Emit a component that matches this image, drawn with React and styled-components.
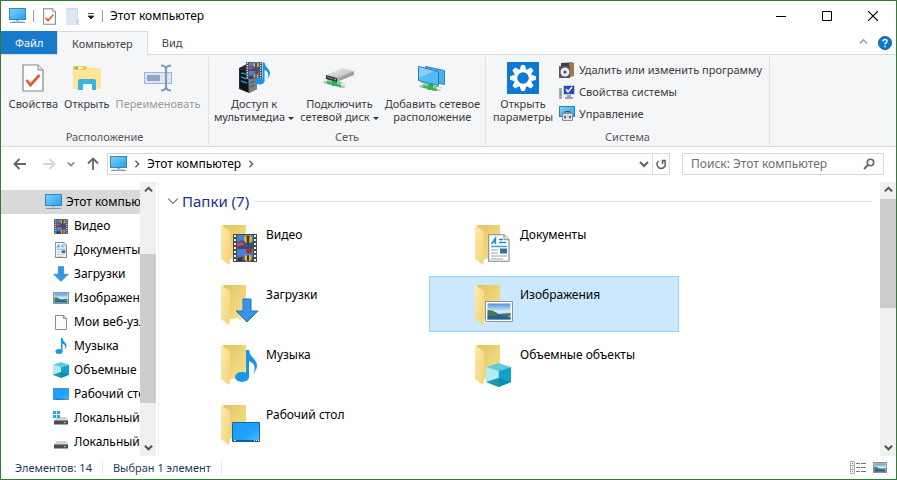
import React from 'react'
import styled, { createGlobalStyle, css } from 'styled-components'

const GlobalStyle = createGlobalStyle`
   * {
      box-sizing: border-box;
   }
   body {
      margin: 0;
      background: #fff;
      font-family: 'Noto Sans', 'Open Sans', sans-serif;
      font-size: 12px;
      line-height: 16px;
      color: #000;
   }
   button, input {
      font: inherit;
      color: inherit;
      border: 0;
      padding: 0;
      margin: 0;
      background: none;
   }
   ul {
      list-style: none;
      margin: 0;
      padding: 0;
   }
   svg {
      display: block;
      flex: none;
   }
`

/* ---------- icons ---------- */

const Svg = ({ w = 16, h = w, vw = w, vh = h, children }) => (
   <svg width={w} height={h} viewBox={`0 0 ${vw} ${vh}`} fill="none" aria-hidden="true">
      {children}
   </svg>
)

const Gradients = () => (
   <svg width="0" height="0" aria-hidden="true">
      <defs>
         <linearGradient id="screen" x1="0" y1="0" x2="1" y2="1">
            <stop offset="0" stopColor="#7fd0fc" />
            <stop offset="0.5" stopColor="#50b9f6" />
            <stop offset="1" stopColor="#25a0ee" />
         </linearGradient>
         <linearGradient id="desk" x1="0" y1="0" x2="1" y2="1">
            <stop offset="0" stopColor="#1a9dfb" />
            <stop offset="0.6" stopColor="#20a2ff" />
            <stop offset="1" stopColor="#5cbcff" />
         </linearGradient>
         <linearGradient id="back" x1="0" y1="0" x2="1" y2="1">
            <stop offset="0" stopColor="#e2c25f" />
            <stop offset="1" stopColor="#fbe48f" />
         </linearGradient>
         <linearGradient id="flap" x1="0" y1="0" x2="1" y2="1">
            <stop offset="0" stopColor="#ffeaa8" />
            <stop offset="1" stopColor="#f3d27a" />
         </linearGradient>
         <linearGradient id="sky" x1="0" y1="0" x2="0" y2="1">
            <stop offset="0" stopColor="#4b93dc" />
            <stop offset="0.5" stopColor="#d9eefa" />
            <stop offset="1" stopColor="#6aa5c9" />
         </linearGradient>
         <linearGradient id="metal" x1="0" y1="0" x2="1" y2="1">
            <stop offset="0" stopColor="#f1f1f1" />
            <stop offset="1" stopColor="#b4b4b4" />
         </linearGradient>
      </defs>
   </svg>
)

const ComputerIcon = () => (
   <Svg w={17} h={16}>
      <rect x="0.5" y="0.5" width="16" height="11" fill="url(#screen)" stroke="#3b86b8" />
      <path d="M7 12h3v1H7z" fill="#9fb4c4" />
      <path d="M1 14.5h15" stroke="#7c9bb3" />
      <path d="M3 13.5h11" stroke="#c6d5e0" />
   </Svg>
)

const CheckPageIcon = ({ w = 13, h = 17 }) => (
   <Svg w={w} h={h} vw={22} vh={28}>
      <path d="M1 1h15l5 5v21H1z" fill="#fff" stroke="#86868c" strokeWidth={w > 13 ? 1.2 : 1.8} />
      <path d="M16 1v5h5" fill="#eee" stroke="#86868c" />
      <path d="M4.500 16l4 5 9-10" stroke="#df602d" strokeWidth="2.800" />
   </Svg>
)

const BlankFolderIcon = () => (
   <Svg w={13} h={17}>
      <path d="M0 0h11v9l2 2v6H0z" fill="#dce6f5" />
      <path d="M10 11v5l3-1v-4z" fill="#c8d5ea" />
      <path d="M.5.5h11v9" stroke="#cbd7ea" />
   </Svg>
)

const OpenFolderIcon = () => (
   <Svg w={28} h={24}>
      <path d="M0 1l1-1h12l2 2h13v21H0z" fill="#ffe597" />
      <path d="M0 1l1-1h12l1 2-2 2H0z" fill="#f1cb45" />
      <path d="M3 1h7v2H3z" fill="#fff6d2" />
      <path d="M2 1h3v2H2z" fill="#62b8a0" />
      <path d="M10 18h9v6h-9z" fill="#f5f6f7" />
      <path d="M5 15q0-2 2-2h14q2 0 2 2v9h-4v-6h-9v6H5z" fill="#38b4e4" />
   </Svg>
)

const RenameIcon = () => (
   <Svg w={28} h={28}>
      <rect x="0.5" y="8.500" width="27" height="11" fill="#dde5f3" stroke="#a4b4d0" />
      <rect x="3" y="11" width="13" height="6" fill="#92a5c9" />
      <path d="M17 1.500q4 0 5 3q1-3 5-3M17 26.500q4 0 5-3q1 3 5 3M22 4v20" stroke="#8598ba" strokeWidth="2.200" />
   </Svg>
)

const Film = ({ x, y, w, h }) => (
   <svg x={x} y={y} width={w} height={h} viewBox="0 0 24 28" preserveAspectRatio="none">
      <path d="M0 0h24v28H0z" fill="#4b4a46" />
      <path d="M2 1v27M22 1v27" stroke="#efefef" strokeWidth="2" strokeDasharray="2 2" />
      <path d="M4 1h16v12H4zM4 15h16v12H4z" fill="#3f83d8" />
      <path d="M4 8l6-2 4 3 6-1v5H4zM4 24l6-2 3 3 7-2v4H4z" fill="#34528c" />
      <circle cx="15" cy="5" r="4" fill="#e9b92d" />
      <path d="M13.500 1.500h3l-.5 9h-2z" fill="#46361f" />
      <path d="M4 9l4-1 4 2-4 2H4z" fill="#dc4255" />
      <circle cx="16" cy="17" r="3" fill="#9c3040" />
      <circle cx="15" cy="24" r="3.500" fill="#f0b52a" />
      <path d="M14 21h2v6h-2zM5 24l4-1v4H5z" fill="#4d2c35" />
   </svg>
)

const Note = ({ x, y, w, h }) => (
   <svg x={x} y={y} width={w} height={h} viewBox="0 0 22 32">
      <ellipse cx="7" cy="27" rx="7" ry="5" fill="#1796ea" />
      <path d="M11 0h3c1 8 8 9 8 16q0 4-4 8c4-8 0-11-4-13v16h-3z" fill="#1796ea" />
   </svg>
)

const MediaIcon = () => (
   <Svg w={32} h={32}>
      <path d="M1 6l8-4 10 3v22l-8 4-10-4z" fill="#26292e" />
      <path d="M10 9l9-4v22l-8 4z" fill="#7b8087" />
      <path d="M2 8l8 2v20l-8-4z" fill="#101419" />
      <path d="M3 11l6 1M3 15l6 2M3 19l6 2" stroke="#2587d5" strokeWidth="1.500" />
      <path d="M12 13l5-2M12 17l5-2M12 21l5-2M12 25l5-2" stroke="#4e535a" />
      <Film x={8} y={0} w={16} h={17} />
      <Note x={17} y={0} w={15} h={23} />
   </Svg>
)

const Pipe = () => (
   <>
      <path d="M2 2.500l18 5" stroke="#4aa95e" strokeWidth="5" />
      <path d="M2 1.500l18 5" stroke="#86da97" strokeWidth="2" />
      <path d="M1 2.500l3 1M18 7l4 1" stroke="#b5c4ba" strokeWidth="5" />
      <path d="M1 1.500l3 1M18 6l4 1" stroke="#f3f7f4" strokeWidth="2" />
      <path d="M9 2h5v6H9z" fill="#36ad50" />
   </>
)

const NetDriveIcon = () => (
   <Svg w={32} h={20}>
      <g transform="translate(0 10)">
         <Pipe />
      </g>
      <path d="M3 7L20 0l11 3-17 7z" fill="url(#metal)" />
      <path d="M3 7l11 3v4L3 11z" fill="#2f3233" />
      <path d="M14 10l17-7v4l-17 7z" fill="#a0a3a4" />
      <path d="M4 9l6 2" stroke="#8f9394" />
      <path d="M11 11.500h2" stroke="#40d060" strokeWidth="1.500" />
   </Svg>
)

const NetPlaceIcon = () => (
   <Svg w={28} h={25}>
      <g transform="translate(1 16)">
         <Pipe />
      </g>
      <path d="M7.500.5l19 4v14l-19-4z" fill="#48b3f2" stroke="#2b83bd" />
      <path d="M.5.5l20 5v14l-20-5z" fill="#55bbf5" stroke="#2b7ab3" />
      <path d="M1 1l15 4L1 12z" fill="#fff" opacity="0.3" />
   </Svg>
)

const teeth = [0, 45, 90, 135, 180, 225, 270, 315]

const SettingsIcon = () => (
   <Svg w={32} h={32}>
      <path d="M0 0h32v32H0z" fill="#0a7ad8" />
      {teeth.map((a) => (
         <path key={a} d="M13.500 7l1-3.500h3l1 3.500z" fill="#fff" stroke="#fff" transform={`rotate(${a} 16 16)`} />
      ))}
      <circle cx="16" cy="16" r="7.500" stroke="#fff" strokeWidth="3.500" />
   </Svg>
)

const UninstallIcon = () => (
   <Svg w={16}>
      <path d="M2 1l10-1 3 1v13l-4 1z" fill="#7b8a58" />
      <path d="M10 1l4 1v12l-4 1z" fill="#b66f44" />
      <path d="M2 1h8v4H2z" fill="#3a3f43" />
      <path d="M0 4h11v12H0z" fill="#55585a" />
      <circle cx="6" cy="10" r="4.500" fill="#e9ecee" />
      <circle cx="6" cy="10" r="1.500" fill="#4b4e50" />
   </Svg>
)

const SystemIcon = () => (
   <Svg w={16}>
      <path d="M0 4h3v11H0z" fill="#a7aeb2" />
      <path d="M1 6h1v6H1z" fill="#66bd69" />
      <path d="M4 1h12v10H4z" fill="#cdd2d8" />
      <path d="M5 2h10v8H5z" fill="#2646c3" />
      <path d="M7 5l2 3 4-5" stroke="#fff" strokeWidth="1.500" />
      <path d="M8 11h4v2h2v2H6v-2h2z" fill="#9aa2aa" />
   </Svg>
)

const ManageIcon = () => (
   <Svg w={16}>
      <rect x="0.5" y="0.5" width="15" height="10" fill="url(#screen)" stroke="#2b7fb5" />
      <path d="M6 7V5.500h5V7" stroke="#555" />
      <path d="M3.500 7.500h10v7h-10z" fill="#e6e8ea" stroke="#8b9196" />
      <path d="M4 10h9" stroke="#b7bcc0" />
      <path d="M6 10v2.500M11 10v2.500" stroke="#45494c" strokeWidth="1.500" />
   </Svg>
)

const Picture = ({ x = 0, y = 0, w, h }) => (
   <svg x={x} y={y} width={w} height={h} viewBox="0 0 28 21" preserveAspectRatio="none">
      <path d="M.5.5h27v20H.5z" fill="#fff" stroke="#8d949a" strokeWidth={w > 20 ? 1 : 3} />
      <path d="M2.500 2.500h23v16h-23z" fill="url(#sky)" />
      <path d="M2.500 9q6 0 11 4l12-1v3h-23z" fill="#427b55" />
      <path d="M2.500 15l14-1 9 2v2.500h-23z" fill="#27618c" />
   </svg>
)

const Page = ({ x = 0, y = 0, w, h, small }) => (
   <svg x={x} y={y} width={w} height={h} viewBox="0 0 22 28" preserveAspectRatio="none">
      <path d="M.7.7H16l5 5v21.600H.7z" fill="#fff" stroke="#85888c" strokeWidth={small ? 1.8 : 1.1} />
      <path d="M16 .7v5h5" fill="#e7e9eb" stroke="#85888c" />
      <path d="M3.500 10l4-6v6M4.500 8h3M11 5.500h4M11 8.500h7" stroke="#2389cb" strokeWidth="1.400" />
      <path d="M3 12.500h16" stroke="#36a3da" strokeWidth="1.500" />
      <path d="M3 16h7M3 19h7M3 22h16M3 25h12" stroke="#9aa1a6" />
      <path d="M12 14.500h7v5h-7z" fill="#3b6c9f" />
   </svg>
)

const Arrow = ({ x = 0, y = 0, w, h }) => (
   <svg x={x} y={y} width={w} height={h} viewBox="0 0 24 25" preserveAspectRatio="none">
      <path d="M8 1h8v12h7L12 24 1 13h7z" fill="#3795e6" stroke="#2478bd" />
   </svg>
)

const Cube = ({ x = 0, y = 0, w, h }) => (
   <svg x={x} y={y} width={w} height={h} viewBox="0 0 24 24" preserveAspectRatio="none">
      <path d="M0 4l12-4 12 4-12 4z" fill="#62c9da" />
      <path d="M0 4l12 4v16L0 19z" fill="#6fd3e2" />
      <path d="M24 4L12 8v16l12-5z" fill="#12a3cb" />
      <path d="M0 4l12 4v7L0 19z" fill="#b3ebf1" />
      <path d="M0 19l12-4 12 4-12 5z" fill="#0a87a6" opacity="0.8" />
   </svg>
)

const Desk = ({ x = 0, y = 0, w, h }) => (
   <svg x={x} y={y} width={w} height={h} viewBox="0 0 28 20" preserveAspectRatio="none">
      <path d="M.5.5h27v19H.5z" fill="url(#desk)" stroke="#13679f" />
      <path d="M1 18.500h26" stroke="#0c5b98" />
      <path d="M2 18.500h1.500M22 18.500h1M24 18.500h1M26 18.500h1" stroke="#fff" />
   </svg>
)

const BlankPageIcon = () => (
   <Svg w={12} h={15}>
      <path d="M.5.5h8l3 3v11H.5z" fill="#fbfbfb" stroke="#8d8d8d" />
      <path d="M8.500.5v3h3" stroke="#8d8d8d" />
   </Svg>
)

const DriveIcon = ({ system }) => (
   <Svg w={16}>
      <path d="M4 7h9l2 4H1z" fill="#cfd1d2" />
      <path d="M1 10.500h14v4H1z" fill="#4b4e50" />
      <path d="M11 12.500h2" stroke="#46e06a" strokeWidth="1.500" />
      {system && <path d="M0 1h3v3H0zM4 1h3v3H4zM0 5h3v3H0zM4 5h3v3H4z" fill="#18afe0" />}
   </Svg>
)

const FolderIcon = ({ children }) => (
   <Svg w={40} h={42}>
      <path d="M2 0h23v34l-17 2z" fill="url(#back)" />
      <path d="M0 0l9 6v27l-1 7-8-6z" fill="url(#flap)" />
      <path d="M9 34l9-1v4l-9 1z" fill="#fff" />
      {children}
   </Svg>
)

const Chevron = ({ dir, size = 8, color = '#666', weight = 1.5 }) => {
   const d = { up: 'M1 6l4-4 4 4', down: 'M1 3l4 4 4-4', right: 'M3 1l4 4-4 4' }[dir]
   return (
      <Svg w={size} vw={10} vh={10}>
         <path d={d} stroke={color} strokeWidth={weight} />
      </Svg>
   )
}

const NavArrow = ({ dir, color }) => (
   <Svg w={14}>
      <g transform={`rotate(${dir} 7 7)`}>
         <path d="M13 7H2M6.500 2L1.500 7l5 5" stroke={color} strokeWidth="1.800" />
      </g>
   </Svg>
)

/* ---------- window frame ---------- */

const Window = styled.div`
   display: flex;
   flex-direction: column;
   height: 100vh;
   border: 1px solid #2f7d32;
   overflow: hidden;
`

const TitleBar = styled.header`
   display: flex;
   align-items: center;
   height: 30px;
   padding-left: 8px;
   flex: none;
`

const QuickAccess = styled.div`
   display: flex;
   align-items: center;
   gap: 7px;
   margin-right: 7px;
`

const Divider = styled.span`
   width: 1px;
   height: 12px;
   background: ${(p) => p.$color || '#9b9b9b'};
`

const Title = styled.h1`
   flex: 1;
   margin: 0;
   font-size: 12px;
   font-weight: 400;
`

const IconButton = styled.button`
   display: flex;
   align-items: center;
   justify-content: center;
   width: ${(p) => p.$w || 16}px;
   height: ${(p) => p.$h || 20}px;
   flex: none;
`

const TabBar = styled.nav`
   display: flex;
   align-items: stretch;
   height: 24px;
   flex: none;
   border-bottom: 1px solid #dadbdc;
   font-size: 11px;
`

const Tab = styled.button`
   padding: 0 14px;
   color: #444;
   ${(p) =>
      p.$file &&
      css`
         width: 56px;
         background: #1979ca;
         color: #fff;
      `}
   ${(p) =>
      p.$active &&
      css`
         margin-bottom: -1px;
         background: #f5f6f7;
         border: 1px solid #dadbdc;
         border-bottom: 0;
      `}
`

const TabBarEnd = styled.div`
   display: flex;
   align-items: center;
   gap: 6px;
   margin-left: auto;
   padding-right: 3px;
`

/* ---------- ribbon ---------- */

const Ribbon = styled.section`
   display: flex;
   flex: none;
   height: 92px;
   padding-top: 2px;
   background: #f5f6f7;
   border-bottom: 1px solid #dadbdc;
   font-size: 11px;
`

const Group = styled.div`
   display: flex;
   flex-direction: column;
   width: ${(p) => p.$w}px;
   margin-bottom: 1px;
   border-right: 1px solid #e0e1e3;
`

const GroupItems = styled.div`
   display: flex;
   flex: 1;
   justify-content: center;
   gap: 6px;
   padding-top: 2px;
`

const GroupTitle = styled.div`
   text-align: center;
   color: #5a5a5a;
`

const BigButton = styled.button`
   display: flex;
   flex-direction: column;
   align-items: center;
   color: ${(p) => (p.disabled ? '#9a9a9a' : '#3b3b3b')};
   line-height: 13px;
   white-space: nowrap;
`

const BigIcon = styled.span`
   display: flex;
   align-items: center;
   justify-content: center;
   height: 38px;
`

const Caret = styled.span`
   display: inline-block;
   margin-left: 3px;
   border: 3px solid transparent;
   border-top-color: #333;
   border-bottom: 0;
   vertical-align: middle;
`

const SmallList = styled.div`
   display: flex;
   flex-direction: column;
`

const SmallButton = styled.button`
   display: flex;
   align-items: center;
   gap: 4px;
   height: 22px;
   color: #3b3b3b;
   white-space: nowrap;
`

/* ---------- address row ---------- */

const AddressRow = styled.div`
   display: flex;
   align-items: center;
   flex: none;
   height: 35px;
   padding: 0 12px 1px 11px;
`

const NavButtons = styled.div`
   display: flex;
   align-items: center;
   gap: 7px;
   margin-right: 8px;
`

const AddressBox = styled.div`
   display: flex;
   align-items: center;
   flex: 1;
   height: 22px;
   padding-left: 2px;
   border: 1px solid #d9d9d9;
   gap: 6px;
`

const AddressEnd = styled.div`
   display: flex;
   margin-left: auto;

   button + button {
      border-left: 1px solid #d9d9d9;
   }
`

const SearchBox = styled.label`
   display: flex;
   align-items: center;
   width: 202px;
   height: 22px;
   margin-left: 12px;
   padding: 0 8px;
   border: 1px solid #d9d9d9;

   input {
      flex: 1;
      min-width: 0;
      outline: 0;
   }
   input::placeholder {
      color: #6d6d6d;
      opacity: 1;
   }
`

/* ---------- body ---------- */

const Body = styled.div`
   display: flex;
   flex: 1;
   min-height: 0;
`

const Sidebar = styled.aside`
   display: flex;
   flex: none;
   width: 158px;
   padding-right: 2px;
   border-right: 1px solid #f0f0f0;
`

const Tree = styled.ul`
   flex: 1;
   min-width: 0;
   padding-top: 8px;
   overflow: hidden;
`

const TreeRow = styled.li`
   display: flex;
   align-items: center;
   gap: ${(p) => (p.$root ? 4 : 5)}px;
   height: 24px;
   padding-left: ${(p) => (p.$root ? 44 : 52)}px;
   background: ${(p) => (p.$root ? '#d9d9d9' : 'none')};
   white-space: nowrap;
   overflow: hidden;
`

const TreeIcon = styled.span`
   display: flex;
   justify-content: center;
   width: 16px;
   flex: none;
`

const Bar = styled.div`
   display: flex;
   flex-direction: column;
   flex: none;
   width: 16px;
   background: #f0f0f0;
`

const Track = styled.div`
   display: grid;
   flex: 1;
   grid-template-rows: ${(p) => p.$rows};
`

const Thumb = styled.span`
   grid-row: 2;
   background: #cdcdcd;
`

const ScrollBar = ({ rows }) => (
   <Bar>
      <IconButton $h={17} aria-label="Вверх">
         <Chevron dir="up" size={9} color="#505050" weight={2.2} />
      </IconButton>
      <Track $rows={rows}>
         <Thumb />
      </Track>
      <IconButton $h={17} aria-label="Вниз">
         <Chevron dir="down" size={9} color="#505050" weight={2.2} />
      </IconButton>
   </Bar>
)

const Content = styled.main`
   flex: 1;
   min-width: 0;
   padding: 8px 8px 0 8px;
   overflow: hidden;
`

const SectionHead = styled.h2`
   display: flex;
   align-items: center;
   gap: 3px;
   height: 22px;
   margin: 0 0 4px;
   font-size: 15px;
   font-weight: 400;
   color: #1e3287;

   &::after {
      content: '';
      flex: 1;
      height: 1px;
      margin-left: 3px;
      background: #e2e2e2;
   }
`

const Tiles = styled.ul`
   display: grid;
   grid-template-columns: repeat(auto-fill, 250px);
   gap: 4px;
   padding-left: 8px;
`

const Tile = styled.li`
   display: flex;
   gap: 5px;
   height: 56px;
   padding: 8px 0 0 45px;
   border: 1px solid ${(p) => (p.$selected ? '#99d1ff' : 'transparent')};
   background: ${(p) => (p.$selected ? '#cce8ff' : 'none')};

   span {
      padding-top: 2px;
   }
`

const StatusBar = styled.footer`
   display: flex;
   align-items: center;
   flex: none;
   height: 23px;
   gap: 10px;
   padding: 0 8px 0 14px;
   font-size: 11px;
   color: #1e395b;
`

const ViewButtons = styled.div`
   display: flex;
   gap: 6px;
   margin-left: auto;
`

const tree = [
   ['Видео', <Svg w={16}><Film x={1} y={1} w={14} h={15} /></Svg>],
   ['Документы', <Svg w={16}><Page x={2} w={12} h={16} small /></Svg>],
   ['Загрузки', <Svg w={16}><Arrow w={16} h={16} /></Svg>],
   ['Изображения', <Svg w={16} h={12}><Picture w={16} h={12} /></Svg>],
   ['Мои веб-узлы', <BlankPageIcon />],
   ['Музыка', <Svg w={16}><Note x={2} w={12} h={16} /></Svg>],
   ['Объемные объекты', <Svg w={16}><Cube w={16} h={16} /></Svg>],
   ['Рабочий стол', <Svg w={16} h={12}><Desk w={16} h={12} /></Svg>],
   ['Локальный диск', <DriveIcon system />],
   ['Локальный диск', <DriveIcon />],
]

const folders = [
   ['Видео', <Film x={12} y={9} w={24} h={28} />],
   ['Документы', <Page x={13} y={9} w={22} h={28} />],
   ['Загрузки', <Arrow x={14} y={13} w={24} h={25} />],
   ['Изображения', <Picture x={10} y={16} w={28} h={21} />],
   ['Музыка', <Note x={14} y={5} w={22} h={32} />],
   ['Объемные объекты', <Cube x={11} y={18} w={25} h={24} />],
   ['Рабочий стол', <Desk x={11} y={17} w={28} h={20} />],
]

function App() {
   return (
      <Window>
         <GlobalStyle />
         <TitleBar>
            <QuickAccess>
               <ComputerIcon />
               <Divider />
               <IconButton $w={16} aria-label="Свойства">
                  <CheckPageIcon />
               </IconButton>
               <IconButton $w={16} aria-label="Новая папка">
                  <BlankFolderIcon />
               </IconButton>
               <IconButton $w={8} aria-label="Настройка панели">
                  <Svg w={8} h={7}>
                     <path d="M1 .5h6M1 3h6L4 6z" stroke="#222" fill="#222" strokeWidth="0.8" />
                  </Svg>
               </IconButton>
               <Divider />
            </QuickAccess>
            <Title>Этот компьютер</Title>
            <IconButton $w={46} $h={30} aria-label="Свернуть">
               <Svg w={10}>
                  <path d="M0 5.500h10" stroke="#000" />
               </Svg>
            </IconButton>
            <IconButton $w={46} $h={30} aria-label="Развернуть">
               <Svg w={10}>
                  <path d="M.5.5h9v9h-9z" stroke="#000" />
               </Svg>
            </IconButton>
            <IconButton $w={46} $h={30} aria-label="Закрыть">
               <Svg w={10}>
                  <path d="M0 0l10 10M10 0L0 10" stroke="#000" strokeWidth="1.200" />
               </Svg>
            </IconButton>
            <Gradients />
         </TitleBar>

         <TabBar>
            <Tab $file>Файл</Tab>
            <Tab $active>Компьютер</Tab>
            <Tab>Вид</Tab>
            <TabBarEnd>
               <IconButton aria-label="Свернуть ленту">
                  <Chevron dir="up" size={9} color="#999" />
               </IconButton>
               <IconButton aria-label="Справка">
                  <Svg w={14}>
                     <circle cx="7" cy="7" r="6.500" fill="#0b78d0" stroke="#0a5a9e" />
                     <path d="M5 5.500q0-2 2-2t2 1.700q0 1-1 1.600T7 8.500M7 9.700v1.500" stroke="#fff" strokeWidth="1.500" />
                  </Svg>
               </IconButton>
            </TabBarEnd>
         </TabBar>

         <Ribbon>
            <Group $w={208}>
               <GroupItems>
                  <BigButton>
                     <BigIcon><CheckPageIcon w={22} h={28} /></BigIcon>
                     Свойства
                  </BigButton>
                  <BigButton>
                     <BigIcon><OpenFolderIcon /></BigIcon>
                     Открыть
                  </BigButton>
                  <BigButton disabled>
                     <BigIcon><RenameIcon /></BigIcon>
                     Переименовать
                  </BigButton>
               </GroupItems>
               <GroupTitle>Расположение</GroupTitle>
            </Group>
            <Group $w={277}>
               <GroupItems>
                  <BigButton>
                     <BigIcon><MediaIcon /></BigIcon>
                     <span>Доступ к<br />мультимедиа<Caret /></span>
                  </BigButton>
                  <BigButton>
                     <BigIcon><NetDriveIcon /></BigIcon>
                     <span>Подключить<br />сетевой диск<Caret /></span>
                  </BigButton>
                  <BigButton>
                     <BigIcon><NetPlaceIcon /></BigIcon>
                     <span>Добавить сетевое<br />расположение</span>
                  </BigButton>
               </GroupItems>
               <GroupTitle>Сеть</GroupTitle>
            </Group>
            <Group $w={284}>
               <GroupItems>
                  <BigButton>
                     <BigIcon><SettingsIcon /></BigIcon>
                     <span>Открыть<br />параметры</span>
                  </BigButton>
                  <SmallList>
                     <SmallButton><UninstallIcon />Удалить или изменить программу</SmallButton>
                     <SmallButton><SystemIcon />Свойства системы</SmallButton>
                     <SmallButton><ManageIcon />Управление</SmallButton>
                  </SmallList>
               </GroupItems>
               <GroupTitle>Система</GroupTitle>
            </Group>
         </Ribbon>

         <AddressRow>
            <NavButtons>
               <IconButton aria-label="Назад"><NavArrow dir={0} color="#666" /></IconButton>
               <span />
               <IconButton $w={14} aria-label="Вперед"><NavArrow dir={180} color="#d6d6d6" /></IconButton>
               <IconButton aria-label="Последние расположения"><Chevron dir="down" color="#8a8a8a" weight={2} /></IconButton>
               <IconButton $w={13} aria-label="На уровень вверх"><NavArrow dir={90} color="#666" /></IconButton>
            </NavButtons>
            <AddressBox>
               <ComputerIcon />
               <Chevron dir="right" weight={2} />
               <span>Этот компьютер</span>
               <Chevron dir="right" weight={2} />
               <AddressEnd>
                  <IconButton $w={17} aria-label="Показать адреса"><Chevron dir="down" size={10} weight={2.2} /></IconButton>
                  <IconButton $w={17} aria-label="Обновить">
                     <Svg w={12}>
                        <path d="M3.500 3A4.200 4.200 0 1 0 8 2.400M11 2.500H7.500V6" stroke="#666" strokeWidth="1.600" />
                     </Svg>
                  </IconButton>
               </AddressEnd>
            </AddressBox>
            <SearchBox>
               <input type="text" placeholder="Поиск: Этот компьютер" aria-label="Поиск" />
               <Svg w={12}>
                  <circle cx="7.500" cy="4.500" r="3.200" stroke="#666" strokeWidth="1.600" />
                  <path d="M5 7L1 11" stroke="#666" strokeWidth="2" />
               </Svg>
            </SearchBox>
         </AddressRow>

         <Body>
            <Sidebar>
               <Tree>
                  <TreeRow $root>
                     <ComputerIcon />
                     <span>Этот компьютер</span>
                  </TreeRow>
                  {tree.map(([name, icon], i) => (
                     <TreeRow key={i}>
                        <TreeIcon>{icon}</TreeIcon>
                        <span>{name}</span>
                     </TreeRow>
                  ))}
               </Tree>
               <ScrollBar rows="55fr 149fr 36fr" />
            </Sidebar>
            <Content>
               <SectionHead>
                  <Chevron dir="down" size={12} color="#777" weight={1} />
                  Папки (7)
               </SectionHead>
               <Tiles>
                  {folders.map(([name, overlay]) => (
                     <Tile key={name} $selected={name === 'Изображения'}>
                        <FolderIcon>{overlay}</FolderIcon>
                        <span>{name}</span>
                     </Tile>
                  ))}
               </Tiles>
            </Content>
            <ScrollBar rows="0fr 109fr 131fr" />
         </Body>

         <StatusBar>
            <span>Элементов: 14</span>
            <Divider $color="#e6e6e6" />
            <span>Выбран 1 элемент</span>
            <Divider $color="#e6e6e6" />
            <ViewButtons>
               <IconButton aria-label="Таблица">
                  <Svg w={16} h={13}>
                     <path d="M.5.5h4v12h-4zM.5 4.500h4M.5 8.500h4" stroke="#aaa" />
                     <path d="M2 2.500h1M2 6.500h1M2 10.500h1M6 2.500h4M11 2.500h5M6 6.500h4M11 6.500h5M6 10.500h4M11 10.500h5" stroke="#777" />
                  </Svg>
               </IconButton>
               <IconButton aria-label="Крупные значки">
                  <Svg w={14} h={11}><Picture w={14} h={11} /></Svg>
               </IconButton>
            </ViewButtons>
         </StatusBar>
      </Window>
   )
}

export default App
